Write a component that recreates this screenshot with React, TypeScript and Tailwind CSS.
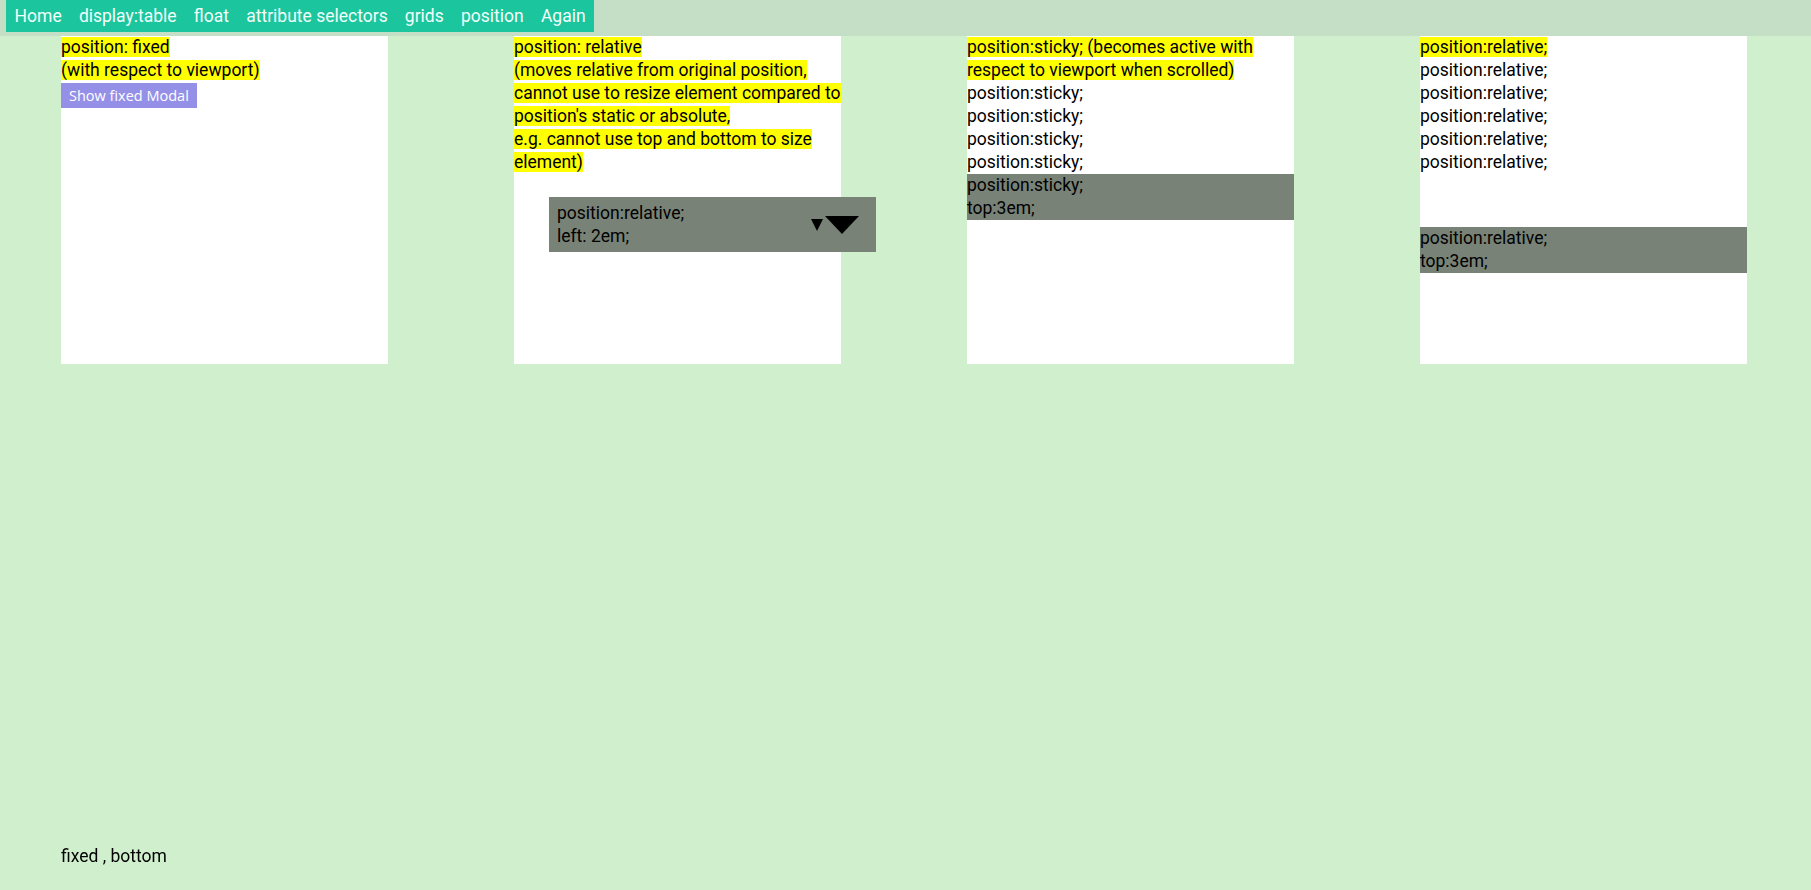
import React from "react";

const HL = ({ children }: { children: React.ReactNode }) => (
  <div className="whitespace-nowrap">
    <span className="bg-[#ffff00]">{children}</span>
  </div>
);

const Line = ({ children }: { children: React.ReactNode }) => (
  <div className="whitespace-nowrap">{children}</div>
);

export default function App() {
  const nav = ["Home", "display:table", "float", "attribute selectors", "grids", "position", "Again"];
  return (
    <div
      className="min-h-[890px] bg-[#d0efcc] text-black text-[17.5px] leading-[23px]"
      style={{ fontFamily: "Roboto, 'Liberation Sans', sans-serif" }}
    >
      <header className="h-[36px] bg-[#c5dfc6] pl-[6px]">
        <nav className="inline-flex h-[32px] items-center bg-[#1bc59e] text-[#f2fffa]">
          {nav.map((n) => (
            <span key={n} className="px-[8.6px] whitespace-nowrap">
              {n}
            </span>
          ))}
        </nav>
      </header>

      <main className="flex gap-[126px] pl-[61px]">
        <section className="h-[328px] w-[327px] bg-white">
          <HL>position: fixed</HL>
          <HL>(with respect to viewport)</HL>
          <button
            className="mt-[1px] h-[25px] bg-[#9490e8] px-[8px] text-[14.5px] leading-[25px] text-white"
            style={{ fontFamily: "'Open Sans', 'DejaVu Sans', sans-serif" }}
          >
            Show fixed Modal
          </button>
        </section>

        <section className="h-[328px] w-[327px] bg-white">
          <HL>position: relative</HL>
          <HL>(moves relative from original position,</HL>
          <HL>cannot use to resize element compared to</HL>
          <HL>position's static or absolute,</HL>
          <HL>e.g. cannot use top and bottom to size</HL>
          <HL>element)</HL>
          <div className="relative left-[35px] mt-[23px] flex h-[55px] w-[327px] items-center justify-between bg-[#788276] pl-[8px] pr-[17px]">
            <div>
              <Line>position:relative;</Line>
              <Line>left: 2em;</Line>
            </div>
            <div className="flex items-center gap-[2px]">
              <span className="h-0 w-0 border-x-[6.5px] border-t-[12px] border-x-transparent border-t-black" />
              <span className="h-0 w-0 border-x-[17px] border-t-[18px] border-x-transparent border-t-black" />
            </div>
          </div>
        </section>

        <section className="h-[328px] w-[327px] bg-white">
          <HL>position:sticky; (becomes active with</HL>
          <HL>respect to viewport when scrolled)</HL>
          <Line>position:sticky;</Line>
          <Line>position:sticky;</Line>
          <Line>position:sticky;</Line>
          <Line>position:sticky;</Line>
          <div className="sticky top-[3em] bg-[#788276]">
            <Line>position:sticky;</Line>
            <Line>top:3em;</Line>
          </div>
        </section>

        <section className="h-[328px] w-[327px] bg-white">
          <HL>position:relative;</HL>
          <Line>position:relative;</Line>
          <Line>position:relative;</Line>
          <Line>position:relative;</Line>
          <Line>position:relative;</Line>
          <Line>position:relative;</Line>
          <div className="relative top-[3em] bg-[#788276]">
            <Line>position:relative;</Line>
            <Line>top:3em;</Line>
          </div>
        </section>
      </main>

      <div className="fixed bottom-[22px] left-[61px]">fixed , bottom</div>
    </div>
  );
}
